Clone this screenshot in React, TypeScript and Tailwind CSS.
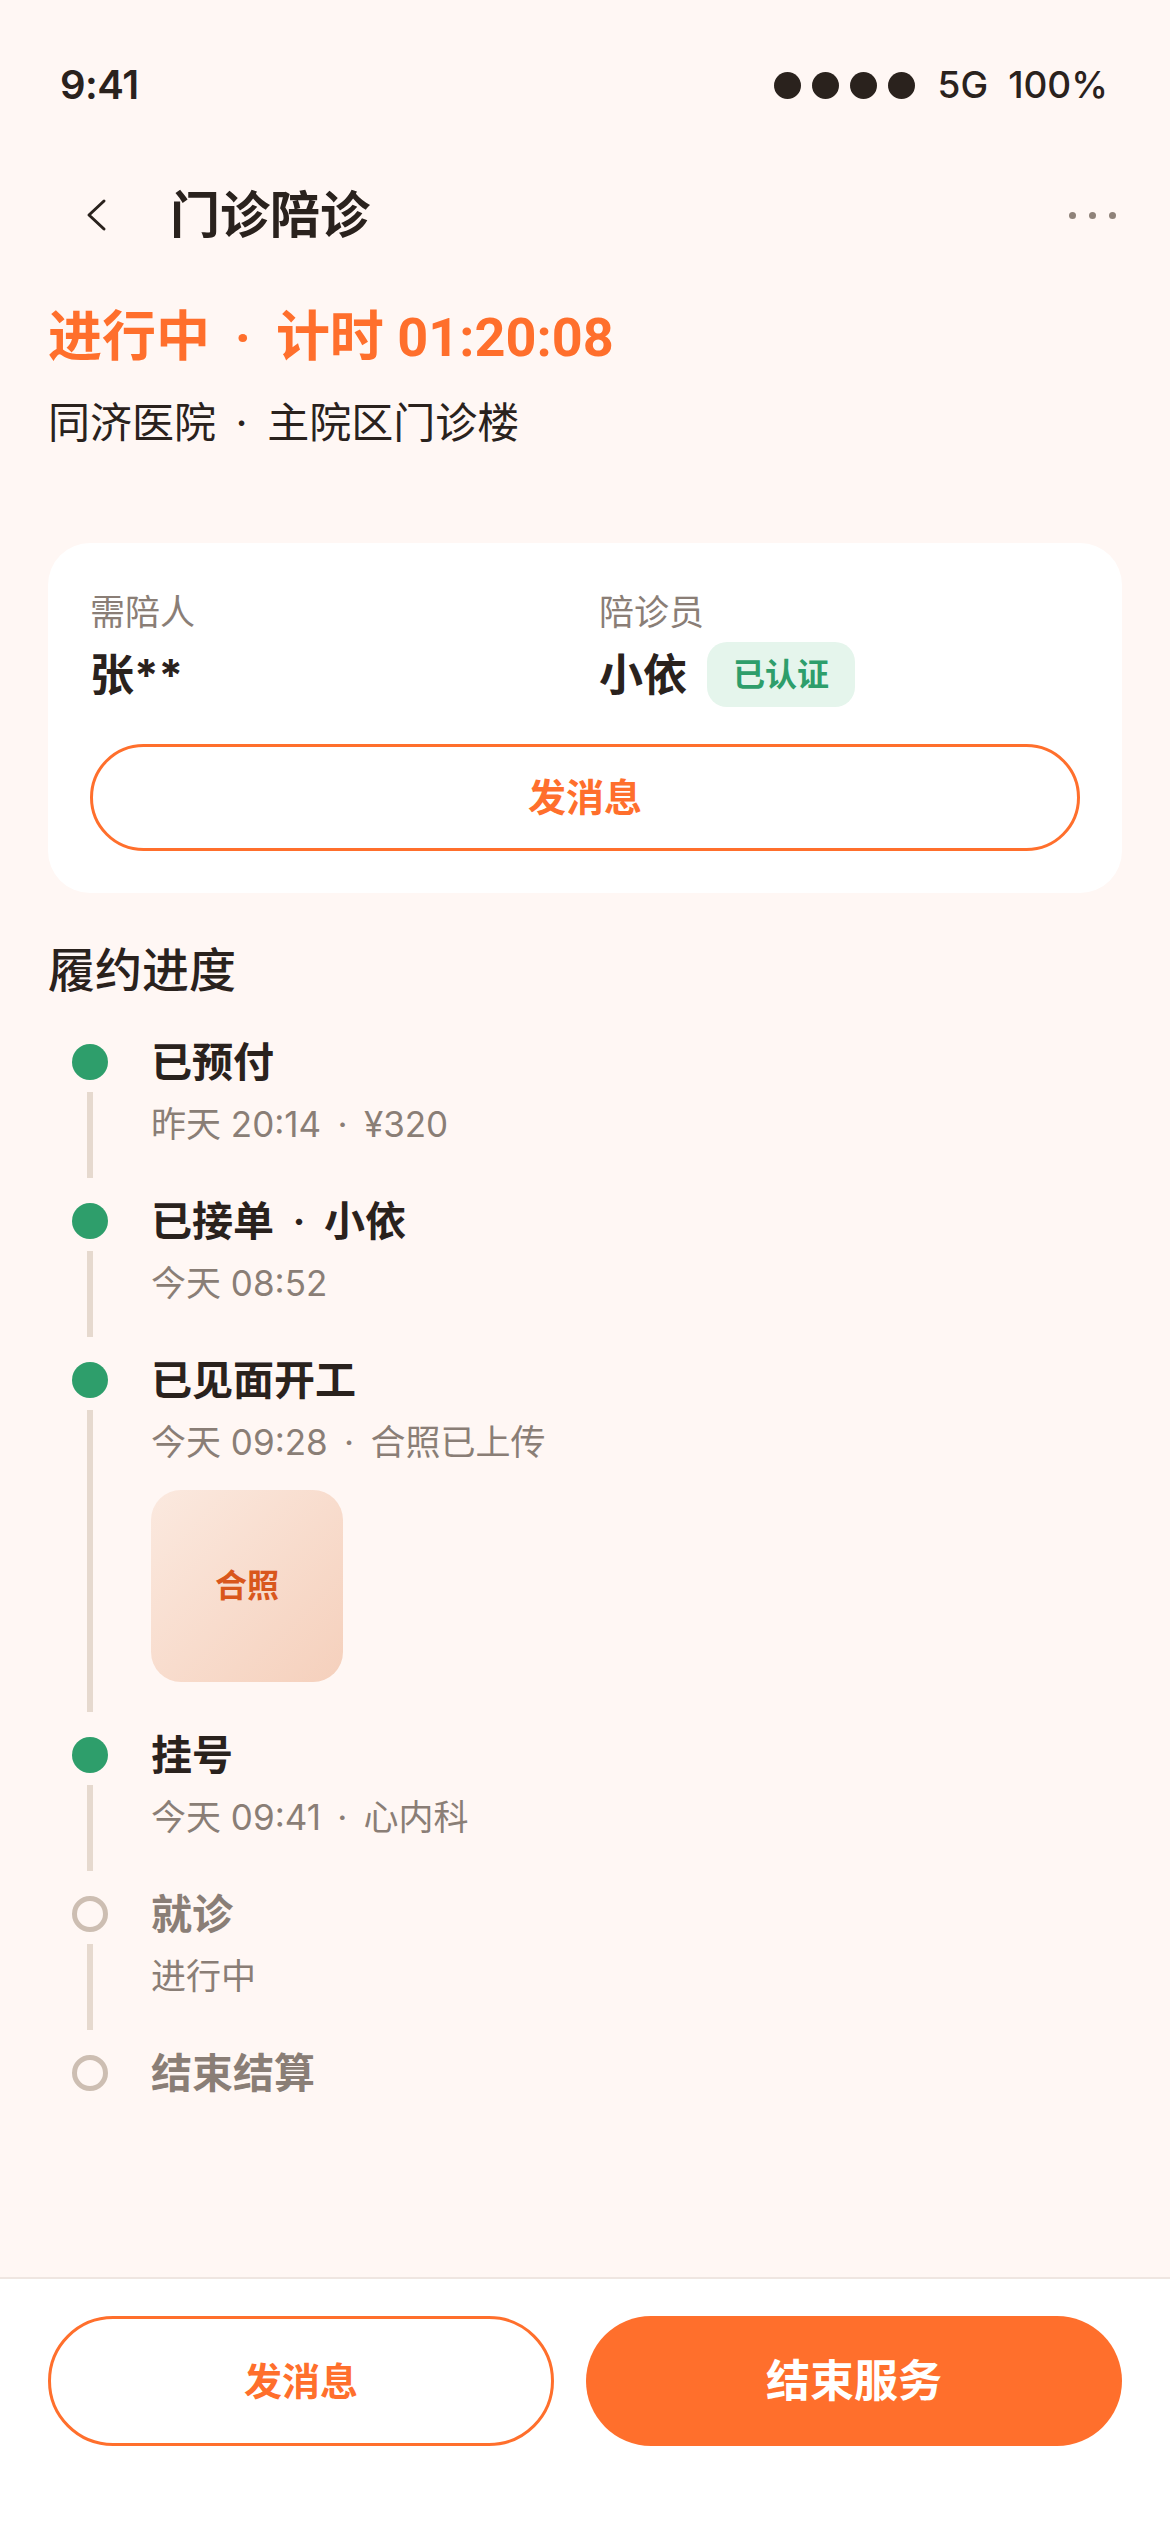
import React from "react";

const Dot = () => <span className="inline-block w-[1.22em] text-center">·</span>;

type Step = {
  title: React.ReactNode;
  sub?: React.ReactNode;
  done: boolean;
  photo?: boolean;
  last?: boolean;
};

const steps: Step[] = [
  { title: "已预付", sub: <>昨天 20:14<Dot />¥320</>, done: true },
  { title: <>已接单<Dot />小依</>, sub: "今天 08:52", done: true },
  { title: "已见面开工", sub: <>今天 09:28<Dot />合照已上传</>, done: true, photo: true },
  { title: "挂号", sub: <>今天 09:41<Dot />心内科</>, done: true },
  { title: "就诊", sub: "进行中", done: false },
  { title: "结束结算", done: false, last: true },
];

export default function App() {
  return (
    <div className="h-[2532px] w-[1170px] flex flex-col bg-[#fff7f4] text-[#2a221d] font-['Inter','Noto_Sans_CJK_SC',sans-serif] overflow-hidden">
      <div className="flex-1 flex flex-col">
        {/* status bar */}
        <div className="mt-[64px] h-[42px] flex items-center justify-between pl-[60px] pr-[62px]">
          <span className="text-[40px] font-semibold leading-[42px] tracking-[-0.5px]">9:41</span>
          <div className="flex items-center">
            <div className="flex gap-[11px]">
              <span className="w-[27px] h-[27px] rounded-full bg-[#2a221d]" />
              <span className="w-[27px] h-[27px] rounded-full bg-[#2a221d]" />
              <span className="w-[27px] h-[27px] rounded-full bg-[#2a221d]" />
              <span className="w-[27px] h-[27px] rounded-full bg-[#2a221d]" />
            </div>
            <span className="ml-[23px] text-[37px] font-medium leading-[42px]">5G</span>
            <span className="ml-[20px] text-[37px] font-medium leading-[42px]">100%</span>
          </div>
        </div>

        {/* nav */}
        <div className="mt-[59px] h-[100px] flex items-center pl-[84px] pr-[54px]">
          <svg width="24" height="34" viewBox="0 0 24 34" className="shrink-0">
            <polyline points="20,3 5,17 20,31" fill="none" stroke="#2a221d" strokeWidth="3" strokeLinecap="round" strokeLinejoin="round" />
          </svg>
          <span className="ml-[62px] text-[50px] font-bold leading-[60px]">门诊陪诊</span>
          <div className="ml-auto flex gap-[13px]">
            <span className="w-[7px] h-[7px] rounded-full bg-[#8f8279]" />
            <span className="w-[7px] h-[7px] rounded-full bg-[#8f8279]" />
            <span className="w-[7px] h-[7px] rounded-full bg-[#8f8279]" />
          </div>
        </div>

        <div className="px-[48px] flex flex-col">
          <div className="mt-[41px] text-[54px] leading-[64px] font-bold text-[#ff6f2c] font-['Roboto','Noto_Sans_CJK_SC',sans-serif]">
            进行中<Dot />计时 01:20:08
          </div>
          <div className="mt-[27px] text-[42px] leading-[52px]">
            同济医院<Dot />主院区门诊楼
          </div>

          {/* card */}
          <div className="mt-[94px] bg-white rounded-[42px] pt-[45px] pb-[42px] px-[42px]">
            <div className="grid grid-cols-2 gap-x-[28px]">
              <div>
                <div className="text-[35px] leading-[48px] text-[#8a7e76]">需陪人</div>
                <div className="mt-[6px] h-[65px] flex items-center text-[44px] font-bold">张**</div>
              </div>
              <div>
                <div className="text-[35px] leading-[48px] text-[#8a7e76]">陪诊员</div>
                <div className="mt-[6px] h-[65px] flex items-center">
                  <span className="text-[44px] font-bold">小依</span>
                  <span className="ml-[20px] h-[65px] px-[26px] rounded-[20px] bg-[#e5f5ec] text-[#2e9e6b] text-[32px] font-semibold flex items-center">
                    已认证
                  </span>
                </div>
              </div>
            </div>
            <button className="mt-[37px] w-full h-[107px] rounded-full border-[3px] border-[#ff6f2c] text-[#ff6f2c] text-[38px] font-bold flex items-center justify-center">
              发消息
            </button>
          </div>

          <div className="mt-[47px] text-[47px] leading-[60px] font-medium">履约进度</div>

          {/* timeline */}
          <div className="mt-[38px] pl-[24px] flex flex-col">
            {steps.map((s, i) => (
              <div key={i} className="flex">
                <div className="w-[36px] shrink-0 flex flex-col items-center pt-[6px]">
                  {s.done ? (
                    <span className="w-[36px] h-[36px] rounded-full bg-[#2e9e6b]" />
                  ) : (
                    <span className="w-[36px] h-[36px] rounded-full border-[5px] border-[#cdbeb2]" />
                  )}
                  {!s.last && <span className="mt-[12px] mb-[19px] flex-1 w-[6px] bg-[#e6d9ce]" />}
                </div>
                <div className={`ml-[43px] flex flex-col ${s.last ? "" : "pb-[49px]"}`}>
                  <div className={`text-[41px] leading-[48px] font-semibold ${s.done ? "text-[#2a221d]" : "text-[#8a7e76]"}`}>
                    {s.title}
                  </div>
                  {s.sub && (
                    <div className="mt-[14px] text-[35px] leading-[48px] text-[#8a7e76]">{s.sub}</div>
                  )}
                  {s.photo && (
                    <div className="mt-[24px] w-[192px] h-[192px] rounded-[30px] bg-linear-to-br from-[#fbe9df] to-[#f5d0bc] flex items-center justify-center text-[32px] font-bold text-[#d9571c]">
                      合照
                    </div>
                  )}
                </div>
              </div>
            ))}
          </div>
        </div>
      </div>

      {/* bottom bar */}
      <div className="border-t-[2px] border-[#efe6e1] bg-white pt-[37px] pb-[86px] px-[48px] flex gap-[32px]">
        <button className="w-[506px] h-[130px] rounded-full border-[3px] border-[#ff6f2c] bg-white text-[#ff6f2c] text-[38px] font-bold flex items-center justify-center">
          发消息
        </button>
        <button className="flex-1 h-[130px] rounded-full bg-[#ff6f2c] text-white text-[44px] font-bold flex items-center justify-center">
          结束服务
        </button>
      </div>
    </div>
  );
}
